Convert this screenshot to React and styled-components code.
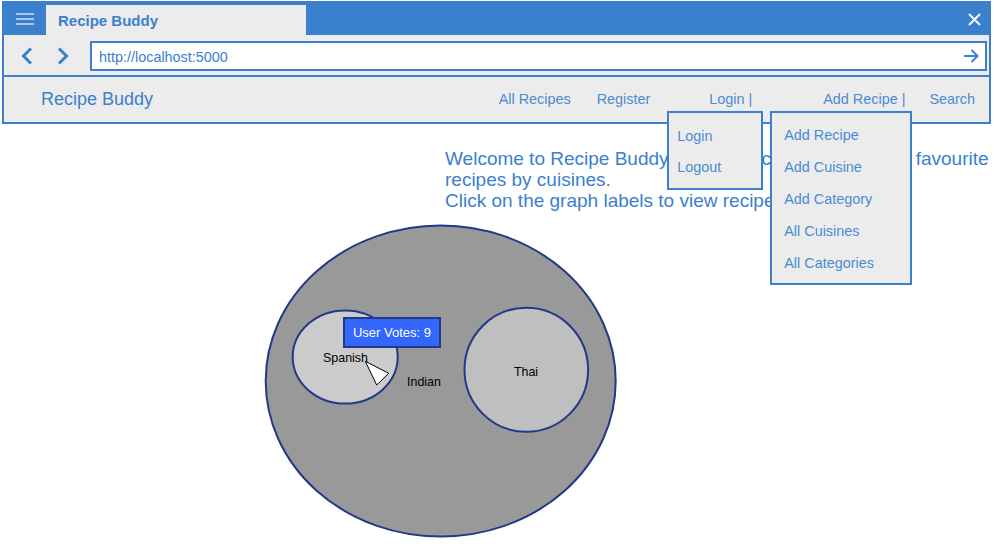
import React from "react";
import styled, { createGlobalStyle } from "styled-components";

const BLUE = "#3b80cc";
const LINK = "#4a8bd5";
const PANEL = "#ececec";
const NAVY = "#22398a";

const GlobalStyle = createGlobalStyle`
  body {
    margin: 0;
    background: #ffffff;
    font-family: "Liberation Sans", Arial, sans-serif;
  }
`;

const Page = styled.div`
  width: 994px;
  height: 553px;
  overflow: hidden;
`;

const Window = styled.div`
  box-sizing: border-box;
  width: 989px;
  margin: 1px 0 0 2px;
  border: 2px solid ${BLUE};
  background: ${PANEL};
`;

const TitleBar = styled.div`
  display: flex;
  height: 32px;
  background: ${BLUE};
`;

const MenuButton = styled.div`
  display: flex;
  align-items: center;
  justify-content: center;
  width: 42px;
`;

const Tab = styled.div`
  display: flex;
  align-items: center;
  box-sizing: border-box;
  width: 260px;
  margin-top: 2px;
  padding-left: 12px;
  background: ${PANEL};
  color: ${BLUE};
  font-size: 15px;
  font-weight: bold;
`;

const CloseButton = styled.div`
  display: flex;
  align-items: center;
  justify-content: center;
  width: 30px;
  margin-left: auto;
`;

const AddressRow = styled.div`
  display: flex;
  align-items: flex-start;
  box-sizing: border-box;
  height: 42px;
  padding: 6px 2px 0 5px;
  border-bottom: 2px solid ${BLUE};
`;

const NavArrow = styled.div`
  display: flex;
  align-items: center;
  justify-content: center;
  width: 36px;
  height: 30px;
`;

const UrlField = styled.div`
  display: flex;
  align-items: center;
  flex: 1;
  box-sizing: border-box;
  height: 30px;
  margin-left: 9px;
  padding: 0 6px 0 7px;
  border: 2px solid ${BLUE};
  background: #ffffff;
`;

const UrlText = styled.span`
  flex: 1;
  padding-top: 2px;
  color: ${BLUE};
  font-size: 14.4px;
`;

const Navbar = styled.div`
  display: flex;
  align-items: stretch;
  height: 45px;
  padding: 0 14px 0 37px;
`;

const Brand = styled.div`
  display: flex;
  align-items: center;
  color: ${BLUE};
  font-size: 18px;
`;

const NavList = styled.div`
  display: flex;
  align-items: stretch;
  margin-left: auto;
`;

const NavLink = styled.div`
  position: relative;
  display: flex;
  align-items: center;
  padding-bottom: 2px;
  margin-left: ${(p) => p.$gap}px;
  color: ${LINK};
  font-size: 14.4px;
  white-space: nowrap;
`;

const Menu = styled.div`
  position: absolute;
  top: 34px;
  left: ${(p) => p.$left}px;
  z-index: 5;
  box-sizing: border-box;
  width: ${(p) => p.$width}px;
  height: ${(p) => p.$height}px;
  padding: ${(p) => p.$pad};
  border: 2px solid ${BLUE};
  background: ${PANEL};
`;

const MenuItem = styled.div`
  height: ${(p) => p.$h}px;
  line-height: ${(p) => p.$h}px;
  color: ${LINK};
  font-size: 14.4px;
  white-space: nowrap;
`;

const Main = styled.div`
  display: flex;
  flex-direction: column;
`;

const Intro = styled.p`
  margin: 24px 0 0 445px;
  color: ${BLUE};
  font-size: 19px;
  line-height: 21px;
  white-space: nowrap;
`;

const ChartArea = styled.div`
  position: relative;
  width: 362px;
  height: 326px;
  margin: 3px 0 0 262px;
`;

const Tooltip = styled.div`
  position: absolute;
  left: 81px;
  top: 103px;
  box-sizing: border-box;
  width: 98px;
  height: 31px;
  display: flex;
  align-items: center;
  justify-content: center;
  border: 2px solid ${NAVY};
  background: #3366fb;
  color: #ffffff;
  font-size: 13px;
`;

const Label = styled.text`
  font-family: "Liberation Sans", Arial, sans-serif;
  font-size: 12.4px;
  fill: #000000;
`;

const loginMenu = ["Login", "Logout"];
const recipeMenu = ["Add Recipe", "Add Cuisine", "Add Category", "All Cuisines", "All Categories"];

const App = () => {
  return (
    <Page>
      <GlobalStyle />
      <Window>
        <TitleBar>
          <MenuButton>
            <svg width="18" height="14" viewBox="0 0 18 14">
              <path d="M0 2h18M0 7h18M0 12h18" stroke="#a9c8ec" strokeWidth="2" />
            </svg>
          </MenuButton>
          <Tab>Recipe Buddy</Tab>
          <CloseButton>
            <svg width="13" height="13" viewBox="0 0 13 13">
              <path d="M1 1L12 12M12 1L1 12" stroke="#f4f8fd" strokeWidth="2" />
            </svg>
          </CloseButton>
        </TitleBar>

        <AddressRow>
          <NavArrow>
            <svg width="12" height="18" viewBox="0 0 12 18">
              <path d="M10 1.5L2.5 9L10 16.5" fill="none" stroke={BLUE} strokeWidth="3" />
            </svg>
          </NavArrow>
          <NavArrow>
            <svg width="12" height="18" viewBox="0 0 12 18">
              <path d="M2 1.5L9.5 9L2 16.5" fill="none" stroke={BLUE} strokeWidth="3" />
            </svg>
          </NavArrow>
          <UrlField>
            <UrlText>http://localhost:5000</UrlText>
            <svg width="15" height="14" viewBox="0 0 15 14">
              <path d="M0 7h13.5M7.5 1l6 6-6 6" fill="none" stroke={BLUE} strokeWidth="2" />
            </svg>
          </UrlField>
        </AddressRow>

        <Navbar>
          <Brand>Recipe Buddy</Brand>
          <NavList>
            <NavLink $gap={0}>All Recipes</NavLink>
            <NavLink $gap={26}>Register</NavLink>
            <NavLink $gap={59}>
              Login |
              <Menu $left={-42} $width={96} $height={79} $pad="8px 6px 0 8px">
                {loginMenu.map((item) => (
                  <MenuItem key={item} $h={31}>{item}</MenuItem>
                ))}
              </Menu>
            </NavLink>
            <NavLink $gap={71}>
              Add Recipe |
              <Menu $left={-53} $width={142} $height={174} $pad="6px 6px 0 12px">
                {recipeMenu.map((item) => (
                  <MenuItem key={item} $h={32}>{item}</MenuItem>
                ))}
              </Menu>
            </NavLink>
            <NavLink $gap={24}>Search</NavLink>
          </NavList>
        </Navbar>
      </Window>

      <Main>
        <Intro>
          Welcome to Recipe Buddy! Here you can discover your favourite
          <br />
          recipes by cuisines.
          <br />
          Click on the graph labels to view recipes.
        </Intro>

        <ChartArea>
          {/* bubble pack of cuisines */}
          <svg width="362" height="326" viewBox="0 0 362 326">
            <ellipse cx="178.7" cy="167" rx="175" ry="155.5" fill="#999999" stroke={NAVY} strokeWidth="2" />
            <ellipse cx="83.2" cy="143" rx="52.5" ry="46.5" fill="#cbcbcb" stroke={NAVY} strokeWidth="2" />
            <ellipse cx="264.3" cy="155.8" rx="61.8" ry="62" fill="#bfbfbf" stroke={NAVY} strokeWidth="2" />
            <Label x="83.5" y="148" textAnchor="middle">Spanish</Label>
            <Label x="162" y="172.3" textAnchor="middle">Indian</Label>
            <Label x="264" y="161.6" textAnchor="middle">Thai</Label>
            <path d="M103.3 147.3L126.7 159.3L114.7 171Z" fill="#ffffff" stroke="#000000" strokeWidth="1" strokeLinejoin="miter" />
          </svg>
          <Tooltip>User Votes: 9</Tooltip>
        </ChartArea>
      </Main>
    </Page>
  );
};

export default App;
